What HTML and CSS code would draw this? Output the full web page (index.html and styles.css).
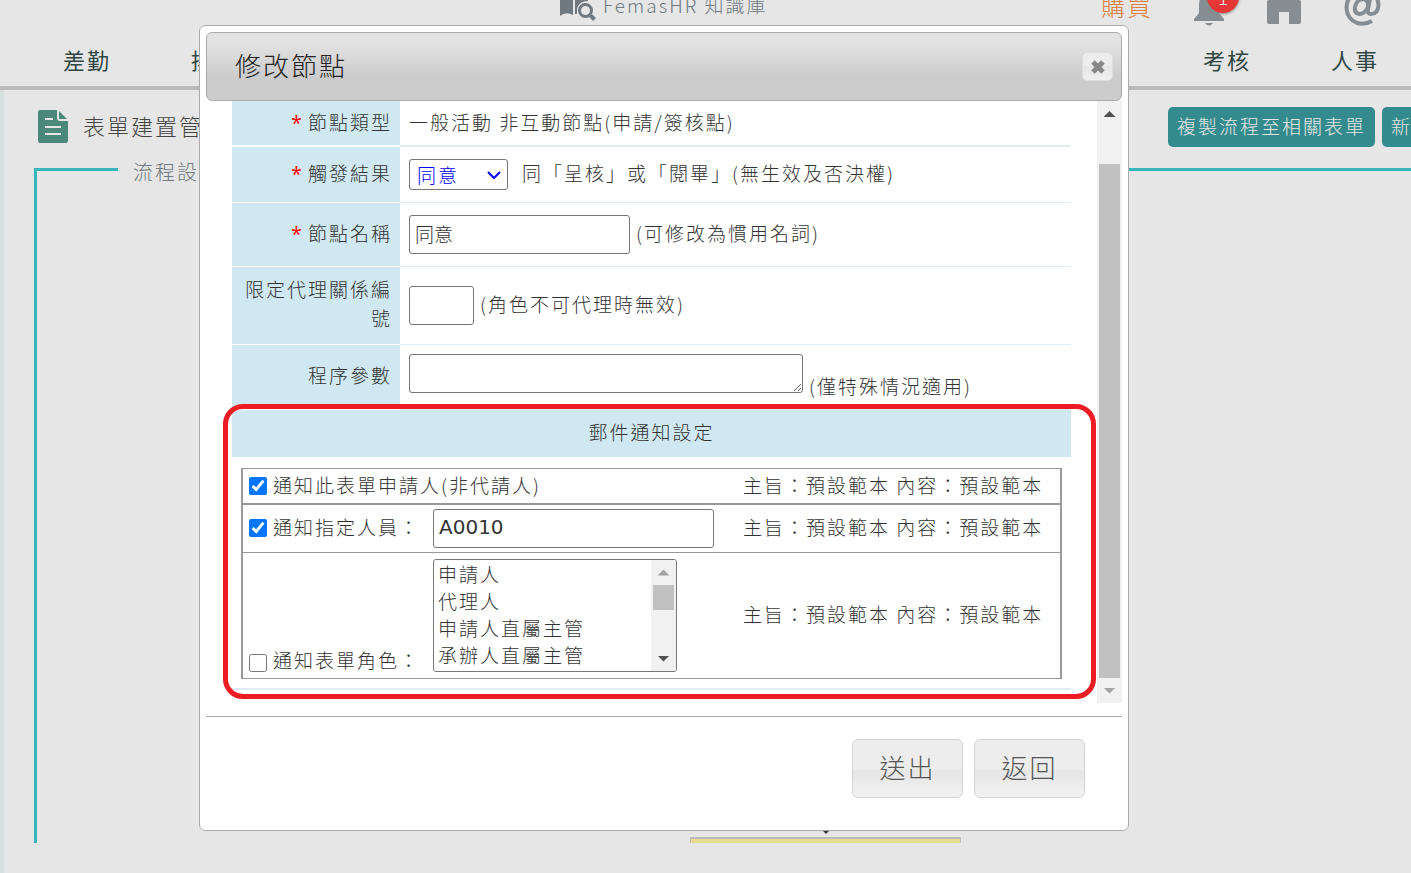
FILE: index.html
```html
<!DOCTYPE html>
<html lang="zh-Hant">
<head>
  <meta charset="UTF-8" />
  <meta name="viewport" content="width=device-width, initial-scale=1.0"/>
  <title>修改節點</title>
  <link rel="stylesheet" href="styles.css">
</head>
<body>

<!-- Top bar -->
<header class="topbar">
  <a class="kb-link" href="#">
    <svg width="36" height="32" viewBox="0 0 36 32">
      <path d="M0 2h13v23q-7-4-13 1z" fill="#70797f"/>
      <path d="M15 2h13v9q-9 0-11 8v5h-2z" fill="#70797f"/>
      <circle cx="25.500" cy="20.500" r="6" fill="none" stroke="#70797f" stroke-width="3"/>
      <path d="M30.500 25.500l4 4" stroke="#70797f" stroke-width="4"/>
    </svg>
    <span>FemasHR 知識庫</span>
  </a>
  <div class="tools">
    <a class="buy" href="#">購買</a>
    <a class="bell" href="#" aria-label="通知">
      <svg width="30" height="36" viewBox="0 0 30 36">
        <path d="M15 2q10 2 10 13v8l5 6v2H0v-2l5-6v-8Q5 4 15 2z" fill="#868d93"/>
        <path d="M11 33h8q-4 5-8 0z" fill="#868d93"/>
      </svg>
      <span class="badge">1</span>
    </a>
    <a href="#" aria-label="首頁">
      <svg width="34" height="35" viewBox="0 0 34 35">
        <path d="M0 10L17 0l17 10v21q0 2-2 2H22V21H12v12H2q-2 0-2-2z" fill="#868d93"/>
      </svg>
    </a>
    <a href="#" aria-label="聯絡">
      <svg width="37" height="38" viewBox="0 0 37 38">
        <path d="M28 33Q21 37 13 35Q3 31 2.500 20Q3 4 19 3Q34 4 34.500 17Q34 26 27 26Q23 26 24 21L26 11M24 19Q21 26 15 26Q10 25 11 19Q13 11 19 11Q25 12 24 19" fill="none" stroke="#868d93" stroke-width="4"/>
      </svg>
    </a>
  </div>
</header>

<nav class="menu">
  <div class="menu-group">
    <a href="#">差勤</a>
    <a href="#">排班</a>
  </div>
  <div class="menu-group">
    <a href="#">考核</a>
    <a href="#">人事</a>
  </div>
</nav>

<!-- Page behind the dialog -->
<main class="page">
  <div class="page-head">
    <svg width="30" height="34" viewBox="0 0 30 34">
      <path d="M2 0h17v8q0 3 3 3h8v20q0 2-2 2H2q-2 0-2-2V2q0-2 2-2z" fill="#4a8879"/>
      <path d="M21 1l8 8h-8z" fill="#4a8879"/>
      <path d="M7 9h8M7 17h16M7 24h16" stroke="#e6e6e6" stroke-width="2"/>
    </svg>
    <h1>表單建置管理</h1>
    <div class="actions">
      <button type="button">複製流程至相關表單</button>
      <button type="button">新</button>
    </div>
  </div>
  <div class="canvas">
    <fieldset class="flow">
      <legend>流程設定</legend>
    </fieldset>
    <div class="flow-node"></div>
  </div>
</main>

<!-- Edit node dialog -->
<div class="dialog" role="dialog" aria-labelledby="dialogTitle">
  <div class="dialog-title">
    <h2 id="dialogTitle">修改節點</h2>
    <button class="close" type="button" aria-label="關閉">
      <svg width="16" height="16" viewBox="0 0 16 16">
        <path d="M3 3l10 10M13 3L3 13" stroke="#888" stroke-width="5"/>
      </svg>
    </button>
  </div>

  <div class="dialog-body">
    <form class="content" id="nodeForm">
      <table class="fields">
        <tr class="row-type">
          <th><i>*</i> 節點類型</th>
          <td><div class="line"><span>一般活動 非互動節點(申請/簽核點)</span></div></td>
        </tr>
        <tr class="row-result">
          <th><i>*</i> <label for="result">觸發結果</label></th>
          <td>
            <div class="line">
              <div class="result">
                <select id="result"><option>同意</option></select>
                <svg width="14" height="10" viewBox="0 0 14 10">
                  <path d="M1 2l6 6 6-6" fill="none" stroke="#00f" stroke-width="2"/>
                </svg>
              </div>
              <span class="result-note">同「呈核」或「閱畢」(無生效及否決權)</span>
            </div>
          </td>
        </tr>
        <tr class="row-name">
          <th><i>*</i> <label for="nodeName">節點名稱</label></th>
          <td>
            <div class="line">
              <input id="nodeName" class="name" type="text" value="同意">
              <span>(可修改為慣用名詞)</span>
            </div>
          </td>
        </tr>
        <tr class="row-agent">
          <th><label for="agentNo">限定代理關係編號</label></th>
          <td>
            <div class="line">
              <input id="agentNo" class="agent" type="text">
              <span>(角色不可代理時無效)</span>
            </div>
          </td>
        </tr>
        <tr class="row-param">
          <th><label for="param">程序參數</label></th>
          <td>
            <div class="line line-end">
              <textarea id="param" rows="1"></textarea>
              <span>(僅特殊情況適用)</span>
            </div>
          </td>
        </tr>
      </table>

      <section class="mail">
        <h3>郵件通知設定</h3>
        <table class="notify">
          <tr class="n-applicant">
            <td>
              <div class="pick">
                <input type="checkbox" id="c1" checked>
                <label for="c1">通知此表單申請人(非代請人)</label>
              </div>
            </td>
            <td class="tpl">主旨：預設範本 內容：預設範本</td>
          </tr>
          <tr class="n-person">
            <td>
              <div class="pick">
                <input type="checkbox" id="c2" checked>
                <label class="fixed" for="c2">通知指定人員：</label>
                <input class="person" type="text" value="A0010" aria-label="指定人員">
              </div>
            </td>
            <td class="tpl">主旨：預設範本 內容：預設範本</td>
          </tr>
          <tr class="n-role">
            <td>
              <div class="pick pick-end">
                <input type="checkbox" id="c3">
                <label class="fixed" for="c3">通知表單角色：</label>
                <div class="listbox">
                  <select size="4" multiple aria-label="表單角色">
                    <option>申請人</option>
                    <option>代理人</option>
                    <option>申請人直屬主管</option>
                    <option>承辦人直屬主管</option>
                  </select>
                  <div class="scroll scroll-list">
                    <b class="up off"></b>
                    <span class="thumb"></span>
                    <b class="down"></b>
                  </div>
                </div>
              </div>
            </td>
            <td class="tpl">主旨：預設範本 內容：預設範本</td>
          </tr>
        </table>
      </section>
    </form>
    <div class="scroll scroll-body">
      <b class="up"></b>
      <span class="thumb"></span>
      <b class="down off"></b>
    </div>
  </div>

  <div class="dialog-foot">
    <button type="submit" form="nodeForm">送出</button>
    <button type="button">返回</button>
  </div>
</div>

</body>
</html>
```
FILE: styles.css
```css
* {
  box-sizing: border-box;
}
body {
  margin: 0;
  min-height: 100vh;
  display: flex;
  flex-direction: column;
  overflow: hidden;
  background: #e6e6e6;
  color: #333;
  font-family: "Noto Sans CJK TC", sans-serif;
  font-size: 19px;
  font-weight: 300;
  letter-spacing: 2px;
  line-height: 29px;
}
a {
  color: inherit;
  text-decoration: none;
}
h1, h2, h3 {
  margin: 0;
  padding-bottom: 4px;
  font-weight: 300;
}
button, input, select, textarea {
  font: inherit;
  color: inherit;
}
svg {
  display: block;
}

/* top bar */
.topbar {
  height: 26px;
  padding: 0 30px 0 560px;
  display: flex;
  justify-content: space-between;
  align-items: flex-end;
}
.kb-link {
  display: flex;
  align-items: center;
  gap: 7px;
  height: 40px;
  color: #70797f;
}
.kb-link span {
  padding-bottom: 4px;
}
.tools {
  display: flex;
  align-items: flex-end;
  gap: 43px;
}
.buy {
  margin-right: -2px;
  color: #e08040;
  font-size: 24px;
  line-height: 40px;
}
.bell {
  position: relative;
}
.badge {
  position: absolute;
  right: -15px;
  bottom: 13px;
  width: 32px;
  height: 32px;
  border-radius: 50%;
  background: #e83535;
  box-shadow: 0 1px 3px #888;
  color: #eee;
  line-height: 32px;
  text-align: center;
  letter-spacing: 0;
}
.menu {
  height: 64px;
  padding: 6px 32px 0 63px;
  display: flex;
  justify-content: space-between;
  align-items: center;
  border-bottom: 4px solid #bbb;
  color: #2f4644;
  font-size: 22px;
  font-weight: 400;
}
.menu-group {
  display: flex;
  gap: 80px;
}

/* page */
.page {
  flex: 1;
  display: flex;
  flex-direction: column;
  padding: 17px 0 30px 30px;
  border-left: 4px solid #d4dfde;
}
.page-head {
  display: flex;
  align-items: center;
  padding-left: 4px;
  height: 40px;
}
h1 {
  margin-left: 15px;
  font-size: 22px;
  color: #444;
}
.actions {
  display: flex;
  gap: 7px;
  margin: 0 -10px 0 auto;
}
.actions button {
  height: 40px;
  padding: 0 9px 4px;
  border: 0;
  border-radius: 5px;
  background: #338b8d;
  color: #e6e6e6;
  letter-spacing: 2px;
}
.canvas {
  flex: 1;
  display: flex;
  position: relative;
}
.flow {
  flex: 1;
  margin: 6px 0 0;
  padding: 0;
  border: 0 solid #36b5bb;
  border-width: 3px 0 0 3px;
}
.flow legend {
  margin-left: 81px;
  padding: 4px 16px 0 15px;
  color: #70797f;
  font-size: 20px;
}
.flow-node {
  position: absolute;
  left: 656px;
  bottom: 0;
  width: 271px;
  height: 6px;
  border: 1px solid #bbb;
  border-width: 2px 1px 0;
  background: #e6dd90;
}
.flow-node::before {
  content: "";
  position: absolute;
  left: 131px;
  top: -9px;
  border: 4px solid transparent;
  border-top-color: #333;
}

/* dialog */
.dialog {
  position: absolute;
  top: 25px;
  left: 199px;
  right: 282px;
  padding: 6px;
  border: 1px solid #aaa;
  border-radius: 6px;
  background: #fff;
}
.dialog-title {
  height: 69px;
  padding: 0 8px 0 28px;
  display: flex;
  justify-content: space-between;
  align-items: center;
  border: 1px solid #aaa;
  border-radius: 6px;
  background: linear-gradient(#e2e2e2 15%, #ccc 65%);
}
h2 {
  font-size: 26px;
  color: #222;
}
.close {
  width: 31px;
  height: 29px;
  padding: 0;
  display: flex;
  align-items: center;
  justify-content: center;
  border: 1px solid #ddd;
  border-radius: 5px;
  background: linear-gradient(#ededed 50%, #e6e6e6 50%, #f0f0f0);
}
.dialog-body {
  display: flex;
  overflow: hidden;
}
.content {
  flex: 1;
  padding: 0 26px 13px;
}
table {
  width: 100%;
  border-collapse: collapse;
}
th, td {
  padding: 0;
}
.fields th {
  width: 168px;
  padding: 0 8px 4px;
  border-bottom: 1px solid #fff;
  background: #cfe8f1;
  font-weight: 300;
  text-align: right;
}
.fields th i {
  color: #f00;
  font-family: "Noto Sans", sans-serif;
  font-style: normal;
  font-weight: 400;
  letter-spacing: 0;
  line-height: 20px;
}
.fields td {
  padding: 0 9px;
  border-bottom: 1px solid #e0edf5;
}
.row-type { height: 45px; }
.row-type th, .row-type td { border-bottom-width: 2px; }
.row-result { height: 56px; }
.row-name { height: 64px; }
.row-agent { height: 78px; }
.row-param { height: 65px; }
.line {
  display: flex;
  align-items: center;
  gap: 6px;
}
.line span {
  padding-bottom: 4px;
}
.line-end {
  height: 46px;
  align-items: flex-end;
}
.line-end span {
  padding-bottom: 0;
}
input[type="text"], textarea, .result select, .listbox {
  border: 1px solid #767676;
  border-radius: 3px;
  background: #fff;
}
input[type="text"], textarea {
  height: 39px;
  padding: 0 5px 2px;
  letter-spacing: 0;
}
.result {
  position: relative;
}
.result select {
  display: block;
  width: 99px;
  height: 31px;
  padding: 0 7px 2px;
  appearance: none;
  color: #00f;
  letter-spacing: 2px;
}
.result svg {
  position: absolute;
  right: 7px;
  top: 11px;
  pointer-events: none;
}
.result-note {
  margin-left: 8px;
}
.name { width: 221px; }
.agent { width: 65px; }
textarea {
  display: block;
  align-self: flex-start;
  width: 394px;
}

/* mail notification */
.mail {
  position: relative;
  padding-bottom: 9px;
  border-bottom: 2px solid #e0edf5;
}
.mail::after {
  content: "";
  position: absolute;
  inset: -6px -25px -11px -9px;
  border: 5px solid #ed1c24;
  border-radius: 20px;
  pointer-events: none;
}
h3 {
  height: 47px;
  background: #cfe8f1;
  font-size: 19px;
  line-height: 43px;
  text-align: center;
}
.notify {
  width: calc(100% - 18px);
  margin: 11px 9px 0;
  border: 1px solid #999;
  border-width: 1px 2px;
  border-collapse: separate;
  border-spacing: 0;
}
.notify td {
  padding: 0 6px;
}
.notify .tpl {
  width: 323px;
  padding-bottom: 3px;
}
.n-applicant { height: 36px; }
.n-applicant td { border-bottom: 2px solid #999; }
.n-person { height: 48px; }
.n-person td { border-bottom: 1px solid #999; }
.n-role { height: 125px; }
.pick {
  display: flex;
  align-items: center;
}
.pick label {
  padding-bottom: 2px;
  line-height: 24px;
}
.pick-end {
  align-items: flex-end;
}
.pick-end label {
  padding-bottom: 0;
}
.pick input[type="checkbox"] {
  width: 18px;
  height: 18px;
  margin: 0 6px 0 0;
  accent-color: #0075ff;
}
.pick .fixed {
  width: 160px;
}
.pick .person {
  width: 281px;
  font-family: "DejaVu Sans", sans-serif;
  font-size: 20px;
  font-weight: 400;
}
.listbox {
  display: flex;
  width: 244px;
  overflow: hidden;
}
.listbox select {
  flex: 1;
  height: 111px;
  padding: 0;
  border: 0;
  outline: 0;
  overflow: hidden;
  background: #fff;
  letter-spacing: 2px;
}
.listbox option {
  height: 27px;
  min-height: 27px;
  padding: 0 4px;
  font-weight: 300;
  line-height: 27px;
}

/* scroll bars */
.scroll {
  width: 25px;
  flex: none;
  display: flex;
  flex-direction: column;
  align-items: center;
  background: #f1f1f1;
}
.scroll .thumb {
  width: 21px;
  background: #c1c1c1;
}
.scroll b {
  flex: none;
  width: 12px;
  height: 6px;
  margin: 10px 0 9px;
  background: #505050;
}
.scroll .up { clip-path: polygon(50% 0, 100% 100%, 0 100%); }
.scroll .down { clip-path: polygon(0 0, 100% 0, 50% 100%); }
.scroll .off { background: #a3a3a3; }
.scroll-body .thumb { flex: 1; margin-top: 38px; }
.scroll-list .thumb { height: 25px; margin-bottom: auto; }

/* dialog buttons */
.dialog-foot {
  display: flex;
  justify-content: flex-end;
  gap: 11px;
  margin-top: 13px;
  padding: 22px 37px 26px 0;
  border-top: 1px solid #aaa;
}
.dialog-foot button {
  width: 111px;
  height: 59px;
  padding: 0 0 4px;
  border: 1px solid #d3d3d3;
  border-radius: 6px;
  background: linear-gradient(#ededed 50%, #e6e6e6 55%, #f2f2f2);
  color: #555;
  font-size: 26px;
  letter-spacing: 2px;
}
```
